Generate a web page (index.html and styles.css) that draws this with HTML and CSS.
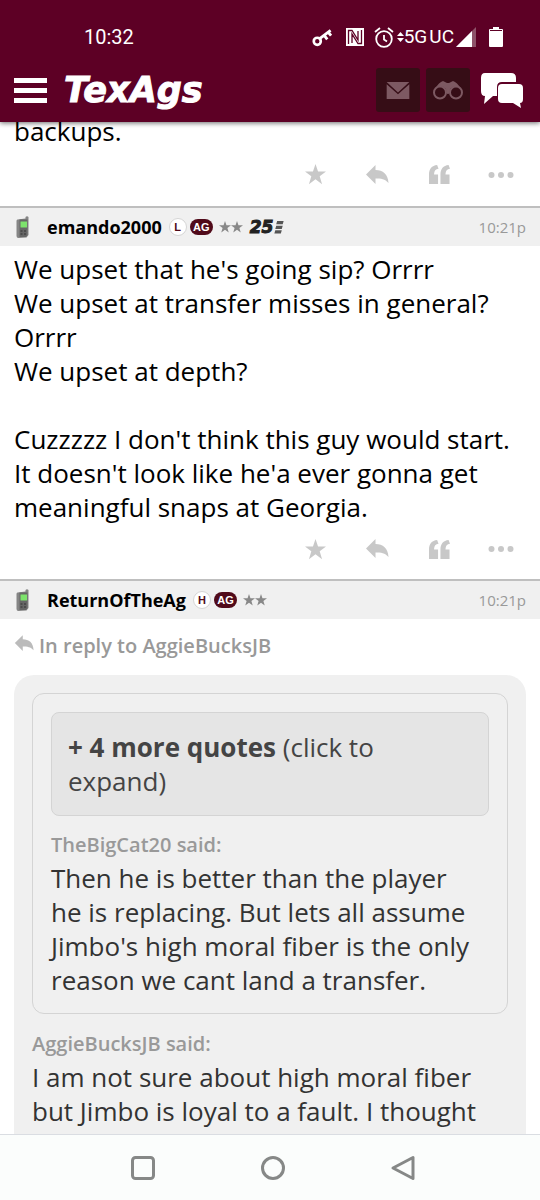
FILE: index.html
```html
<!DOCTYPE html>
<html lang="en">
<head>
<meta charset="utf-8">
<meta name="viewport" content="width=device-width, initial-scale=1">
<title>TexAgs</title>
<link rel="stylesheet" href="styles.css">
</head>
<body>
<svg class="defs" aria-hidden="true">
  <symbol id="star" viewBox="0 0 24 24"><path d="M12 0l2.900 8.600H24l-7.200 5.400 2.700 9L12 17.500 4.500 23l2.700-9L0 8.600h9.100z"/></symbol>
  <symbol id="reply" viewBox="0 0 24 20"><path d="M1 9.500L10.500 0v5C18 5 23 9 23.500 18 20 14 16 13.500 10.500 13.500V19z"/></symbol>
  <symbol id="quote" viewBox="0 0 24 22"><path d="M1 21V11C1 5 4 1.500 9.500 1l1.500 4C8 5.500 6.500 7 6.300 11H10.500V21zM13 21V11C13 5 16 1.500 21.500 1L23 5C20 5.500 18.500 7 18.300 11H22.500V21z"/></symbol>
  <symbol id="dots" viewBox="0 0 26 8"><circle cx="3.500" cy="4" r="3"/><circle cx="13" cy="4" r="3"/><circle cx="22.500" cy="4" r="3"/></symbol>
  <symbol id="phone" viewBox="0 0 14 23">
    <path d="M2 3.500L10 2.500V1q1.500-1.500 3 0V19L11 21.500 3 22Q1 22 1 20V5Q1 3.500 2 3.500z" fill="#858585"/>
    <path d="M4 3.500h8V19l-1.500 2H4z" fill="#666"/>
    <path d="M5 5.500h6.500v6H5z" fill="#7de36c"/>
    <path d="M5 14h2v2H5zM8.500 14h2v2h-2zM5 17h2v2H5zM8.500 17h2v2h-2z" fill="#4c4c4c"/>
  </symbol>
</svg>

<header class="top">
  <div class="status">
    <span class="clock">10:32</span>
    <div class="signals">
      <svg class="key" viewBox="0 0 22 20"><path d="M7 12L19.500 2.500M13 8l3 4M17 4.500l3 3.500" fill="none" stroke="#fff" stroke-width="3"/><circle cx="5.500" cy="14" r="3.700" fill="none" stroke="#fff" stroke-width="2.800"/></svg>
      <svg class="nfc" viewBox="0 0 20 20"><path d="M1 1h18v18H1z" fill="#fff"/><path d="M3.500 17V3.500H7L13 13V4M16.500 3v13.500H13L7 7v9" fill="none" stroke="#5d0025" stroke-width="1.300"/></svg>
      <svg class="alarm" viewBox="0 0 20 21"><g fill="none" stroke="#fff" stroke-width="1.800"><circle cx="10" cy="12" r="7.800"/><path d="M1 5l5-4M19 5l-5-4M10 8v4.500l3 2"/></g></svg>
      <svg class="updown" viewBox="0 0 7 12"><path d="M0 5l3.500-4L7 5zM0 7l3.500 4L7 7z" fill="#fff"/></svg>
      <span class="network"><span>5G</span><span>UC</span></span>
      <svg class="cell" viewBox="0 0 20 20"><path d="M20 0v20H0z" fill="#8e5269"/><path d="M16 4v16H0z" fill="#fff"/></svg>
      <svg class="battery" viewBox="0 0 14 22"><path d="M4 1h6v2h3q1 0 1 1v16q0 1-1 1H1q-1 0-1-1V4q0-1 1-1h3z" fill="#fff"/><path d="M1 4.500h12" stroke="#5d0025" stroke-width="1"/></svg>
    </div>
  </div>
  <div class="bar">
    <button class="menu" type="button" aria-label="Menu"><span></span><span></span><span></span></button>
    <a class="logo" href="#">TexAgs</a>
    <nav class="tools">
      <button class="tile" type="button" aria-label="Messages"><svg class="mail" viewBox="0 0 24 18"><path d="M0 0h24L12 11zM0 2.500L12 13 24 2.500V18H0z"/></svg></button>
      <button class="tile" type="button" aria-label="Watched topics"><svg class="watch" viewBox="0 0 30 20"><g class="rims"><circle cx="7" cy="12.500" r="6"/><circle cx="23" cy="12.500" r="6"/></g><path d="M2 9Q6 2 10 1l4 2h2l4-2q4 1 8 8-5-6-11 0 0 5-2 5t-2-5Q7 3 2 9z"/></svg></button>
      <button class="forums" type="button" aria-label="Forums"><svg viewBox="0 0 44 36"><path d="M5 1h26q5 0 5 5v4H22q-5 0-5 5v9h-4l-9 8 1-8q-4 0-4-5V6q0-5 4-5z"/><path d="M22 12h17q4 0 4 4v11q0 4-3 4l1 5-8-5H22q-4 0-4-4V16q0-4 4-4z"/></svg></button>
    </nav>
  </div>
</header>

<main class="thread">
  <article class="post scrolled">
    <p class="text">backups.</p>
    <div class="actions">
      <button type="button" aria-label="Star"><svg class="i-star"><use href="#star"/></svg></button>
      <button type="button" aria-label="Reply"><svg class="i-reply"><use href="#reply"/></svg></button>
      <button type="button" aria-label="Quote"><svg class="i-quote"><use href="#quote"/></svg></button>
      <button type="button" aria-label="More"><svg class="i-dots"><use href="#dots"/></svg></button>
    </div>
  </article>

  <article class="post">
    <header class="author">
      <svg class="device"><use href="#phone"/></svg>
      <a class="name" href="#">emando2000</a>
      <span class="round">L</span><span class="ag">AG</span>
      <span class="rank"><svg><use href="#star"/></svg><svg><use href="#star"/></svg></span>
      <span class="years">25<svg viewBox="0 0 10 14"><path d="M3 0h7l-1 3.500H2zM2 5h7l-1 3.500H1zM1 10h7l-1 3.500H0z"/></svg></span>
      <time>10:21p</time>
    </header>
    <p class="text">We upset that he's going sip? Orrrr<br>We upset at transfer misses in general? Orrrr<br>We upset at depth?<br><br>Cuzzzzz I don't think this guy would start. It doesn't look like he'a ever gonna get meaningful snaps at Georgia.</p>
    <div class="actions">
      <button type="button" aria-label="Star"><svg class="i-star"><use href="#star"/></svg></button>
      <button type="button" aria-label="Reply"><svg class="i-reply"><use href="#reply"/></svg></button>
      <button type="button" aria-label="Quote"><svg class="i-quote"><use href="#quote"/></svg></button>
      <button type="button" aria-label="More"><svg class="i-dots"><use href="#dots"/></svg></button>
    </div>
  </article>

  <article class="post">
    <header class="author">
      <svg class="device"><use href="#phone"/></svg>
      <a class="name" href="#">ReturnOfTheAg</a>
      <span class="round">H</span><span class="ag">AG</span>
      <span class="rank"><svg><use href="#star"/></svg><svg><use href="#star"/></svg></span>
      <time>10:21p</time>
    </header>
    <a class="inreply" href="#"><svg><use href="#reply"/></svg>In reply to AggieBucksJB</a>
    <blockquote class="quote">
      <blockquote class="nested">
        <button class="expand" type="button"><b>+ 4 more quotes</b> (click to expand)</button>
        <cite>TheBigCat20 said:</cite>
        <p>Then he is better than the player he is replacing. But lets all assume Jimbo's high moral fiber is the only reason we cant land a transfer.</p>
      </blockquote>
      <cite>AggieBucksJB said:</cite>
      <p>I am not sure about high moral fiber but Jimbo is loyal to a fault. I thought we should be more open and</p>
    </blockquote>
  </article>
</main>

<nav class="system">
  <button type="button" aria-label="Recent apps"><svg viewBox="0 0 26 26"><rect x="2.500" y="2.500" width="21" height="21" rx="3"/></svg></button>
  <button type="button" aria-label="Home"><svg viewBox="0 0 26 26"><circle cx="13" cy="13" r="10.500"/></svg></button>
  <button type="button" aria-label="Back"><svg viewBox="0 0 26 26"><path d="M23 2.500v21L3 13z"/></svg></button>
</nav>
</body>
</html>
```
FILE: styles.css
```css
* { box-sizing: border-box; }
body {
  margin: 0;
  height: 100vh;
  display: flex;
  flex-direction: column;
  background: #fff;
  color: #111;
  font: 26px/34px "Open Sans", "Noto Sans", sans-serif;
}
p, blockquote { margin: 0; }
a { color: inherit; text-decoration: none; }
button { border: 0; padding: 0; background: none; color: inherit; font: inherit; cursor: pointer; }
svg { display: block; flex: none; }
.defs { position: absolute; width: 0; height: 0; }

.top { flex: none; position: relative; background: #5d0025; color: #fff; box-shadow: 0 1px 5px rgba(0, 0, 0, .6); }
.status {
  display: flex;
  justify-content: space-between;
  align-items: center;
  padding: 21px 37px 9px 84px;
  font: 20px/32px Roboto, sans-serif;
}
.signals { display: flex; align-items: center; }
.key { width: 21px; height: 19px; margin-right: 12px; }
.nfc { width: 20px; height: 20px; margin-right: 9px; }
.alarm { width: 20px; height: 21px; margin-right: 3px; }
.updown { width: 7px; height: 12px; }
.network { display: flex; gap: 2px; font-size: 19px; margin-right: 2px; }
.cell { width: 20px; height: 20px; margin-right: 13px; }
.battery { width: 14px; height: 22px; }

.bar { display: flex; align-items: center; height: 60px; padding: 0 16px 4px 14px; }
.menu { display: flex; flex-direction: column; gap: 5px; width: 33px; margin-right: 17px; }
.menu span { height: 5px; background: #fff; }
.logo { font: italic bold 35px/40px "DejaVu Sans", sans-serif; -webkit-text-stroke: 1px #fff; }
.tools { display: flex; align-items: center; gap: 6px; margin-left: auto; }
.tile { display: grid; place-items: center; width: 44px; height: 44px; border-radius: 3px; background: #360d16; }
.tile svg { fill: #7d5962; }
.rims { fill: none; stroke: #7d5962; stroke-width: 2; }
.mail { width: 24px; height: 17px; }
.watch { width: 30px; height: 20px; }
.forums { margin-left: 4px; }
.forums svg { width: 44px; height: 36px; fill: #fff; }

.thread { flex: 1; min-height: 0; overflow: hidden; }
.text { padding: 6px 14px 0; color: #000; }
.scrolled { margin-top: -14px; }
.actions { display: flex; justify-content: flex-end; align-items: center; padding: 0 8px 5px; height: 55px; }
.scrolled .actions { height: 58px; }
.actions button { width: 62px; height: 40px; display: flex; justify-content: center; align-items: center; color: #c8c8c8; }
.actions svg { fill: currentColor; }
.i-star { width: 21px; height: 21px; }
.i-reply { width: 24px; height: 20px; }
.i-quote { width: 23px; height: 21px; }
.i-dots { width: 26px; height: 8px; }

.author {
  display: flex;
  align-items: center;
  height: 40px;
  padding: 0 14px;
  border-top: 2px solid #bfbfbf;
  background: #f0f0f0;
  line-height: 24px;
}
.device { width: 17px; height: 23px; margin-right: 16px; }
.name { color: #000; font-size: 18px; font-weight: 700; margin-right: 7px; }
.round, .ag { font: bold 11px/16px "Liberation Sans", sans-serif; text-align: center; }
.round { width: 18px; border: 1px solid #d5d5d5; border-radius: 9px; background: #fff; color: #500a1a; margin-right: 3px; }
.ag { width: 23px; border-radius: 8px; background: #500a1a; color: #fff; margin-right: 6px; }
.rank { display: flex; margin-right: 7px; }
.rank svg { width: 12px; height: 12px; fill: #888; }
.years { display: flex; align-items: center; gap: 1px; color: #222; font: italic bold 17px/20px "DejaVu Sans", sans-serif; -webkit-text-stroke: 1px #222; }
.years svg { width: 10px; height: 13px; fill: #555; }
.author time { margin-left: auto; color: #999; font-size: 15px; }

.inreply { display: flex; gap: 5px; padding: 10px 14px 12px; color: #999; font-size: 20px; font-weight: 600; }
.inreply svg { width: 20px; height: 17px; margin-top: 6px; fill: #bbb; }
.quote { margin: 0 14px; padding: 18px; border-radius: 20px; background: #f0f0f0; color: #333; }
.nested { padding: 18px 18px 16px; margin-bottom: 16px; border: 1px solid #d4d4d4; border-radius: 12px; }
.nested p { padding-right: 10px; }
.expand { display: block; width: 100%; padding: 17px 16px; margin-bottom: 15px; border: 1px solid #d4d4d4; border-radius: 8px; background: #e5e5e5; color: #444; text-align: left; }
cite { display: block; color: #999; font-size: 20px; font-style: normal; font-weight: 600; line-height: 28px; padding-bottom: 2px; }

.system {
  flex: none;
  position: relative;
  display: flex;
  justify-content: space-between;
  align-items: center;
  height: 66px;
  padding: 0 23% 0 24%;
  border-top: 1px solid #dadde2;
  background: #fbfdfc;
}
.system svg { width: 26px; height: 26px; fill: none; stroke: #868887; stroke-width: 3; stroke-linejoin: round; }
```
